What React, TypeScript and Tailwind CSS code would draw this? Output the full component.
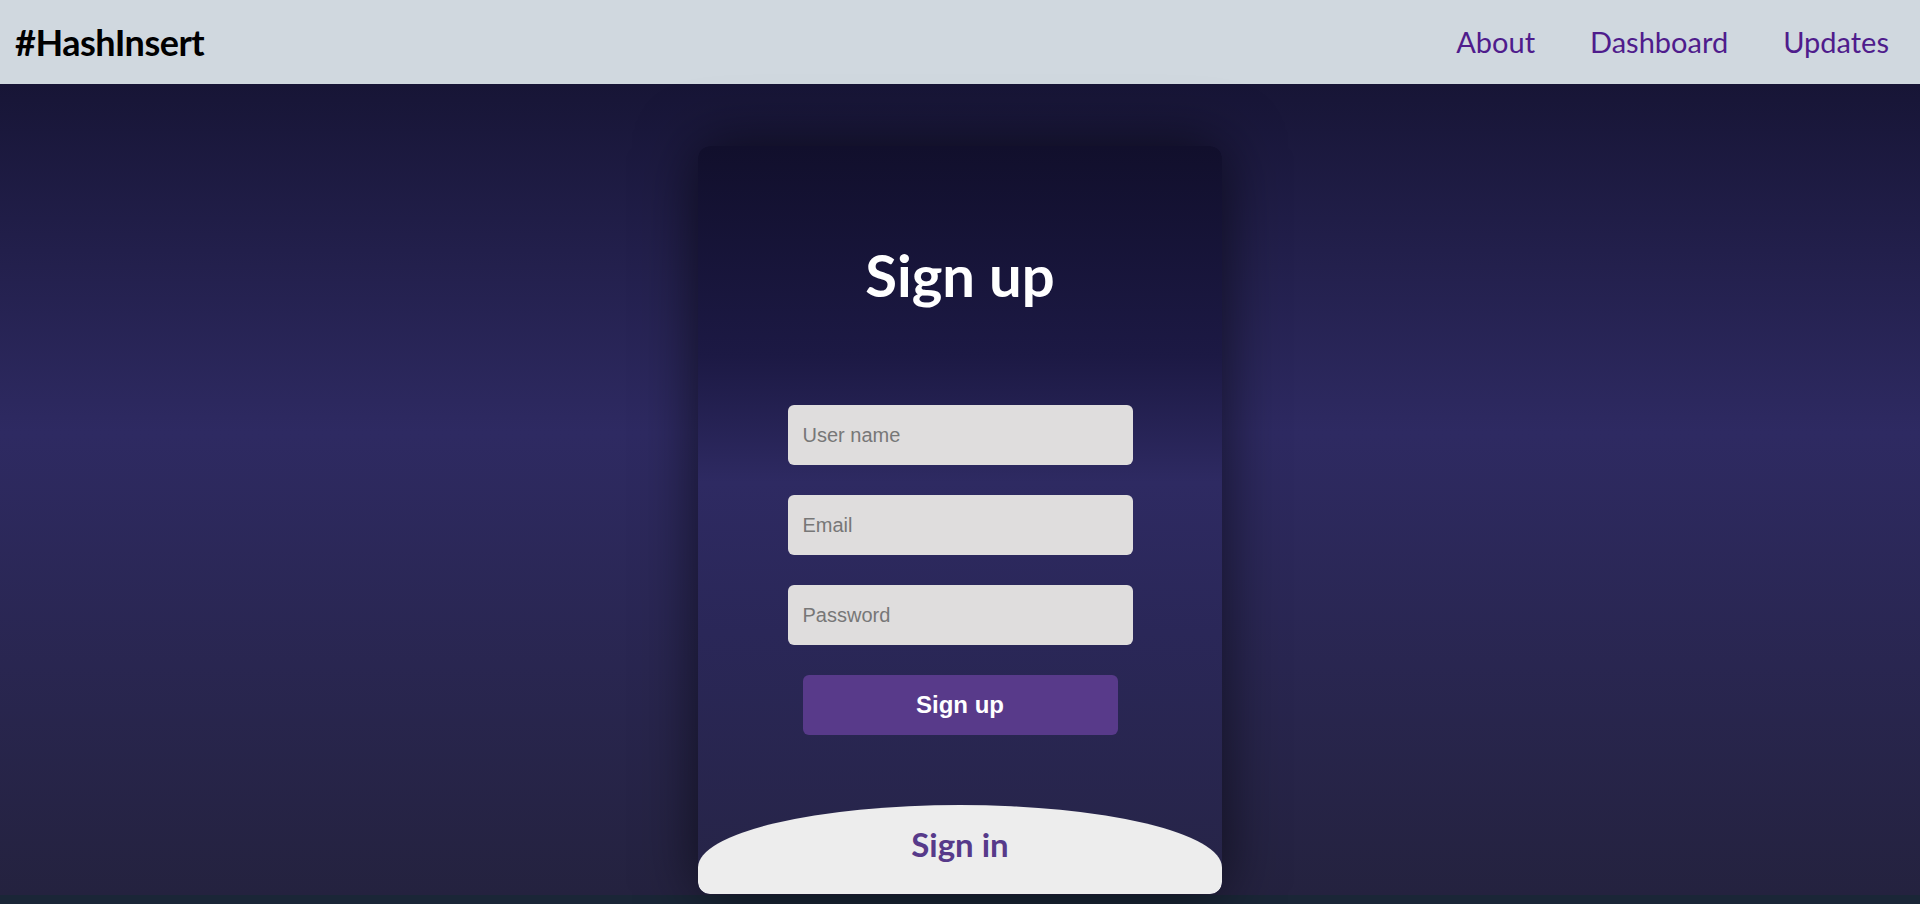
import React from 'react';

const jost = { fontFamily: 'Lato, "Noto Sans", sans-serif' };

function Field({ placeholder, type = 'text' }: { placeholder: string; type?: string }) {
  return (
    <input
      type={type}
      placeholder={placeholder}
      className="w-[345px] h-[60px] rounded-[6px] bg-[#dfdddd] px-[15px] text-[20px] text-[#333] placeholder:text-[#777] outline-none font-['Liberation_Sans',Arial,sans-serif]"
    />
  );
}

export default function App() {
  return (
    <div className="w-full h-[904px] flex flex-col overflow-hidden">
      <header className="h-[84px] shrink-0 bg-[#d0d8df] flex items-center justify-between pl-[15px] pr-[31px]" style={jost}>
        <span className="text-[36px] font-bold text-black tracking-[-0.5px]">#HashInsert</span>
        <nav className="flex items-center gap-[55px] text-[29px] text-[#4f1c8c]">
          <a href="#">About</a>
          <a href="#">Dashboard</a>
          <a href="#">Updates</a>
        </nav>
      </header>

      <main className="h-[811px] shrink-0 flex justify-center bg-[linear-gradient(to_bottom,#171536_0%,#2e2a62_43%,#24223f_100%)]">
        <div className="mt-[62px] w-[524px] h-[748px] rounded-[12px] overflow-hidden relative flex flex-col items-center shadow-[0_0_60px_rgba(0,0,0,0.6)] bg-[linear-gradient(to_bottom,#110f2c_0%,#1c1944_28%,#2e2a62_45%,#2a2758_65%,#262446_100%)]">
          <h1 className="mt-[100px] h-[58px] leading-[58px] text-[58px] font-bold text-white" style={jost}>
            Sign up
          </h1>

          <form className="mt-[101px] flex flex-col items-center gap-[30px]" onSubmit={(e) => e.preventDefault()}>
            <Field placeholder="User name" />
            <Field placeholder="Email" type="email" />
            <Field placeholder="Password" type="password" />
            <button
              type="submit"
              className="w-[315px] h-[60px] rounded-[6px] bg-[#583a8a] text-white text-[24px] font-bold font-['Liberation_Sans',Arial,sans-serif]"
            >
              Sign up
            </button>
          </form>

          <div className="mt-auto w-full h-[89px] bg-[#ededed] rounded-[50%_50%_12px_12px/70%_70%_12px_12px] flex items-center justify-center">
            <span className="text-[33px] font-bold text-[#573a8a] pb-[10px]" style={jost}>
              Sign in
            </span>
          </div>
        </div>
      </main>

      <div className="h-[9px] shrink-0 bg-[#1a2637]" />
    </div>
  );
}
